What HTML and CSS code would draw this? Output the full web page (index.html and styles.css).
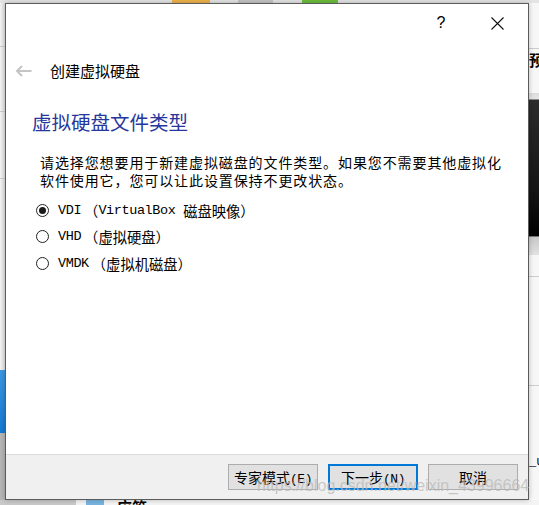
FILE: index.html
```html
<!DOCTYPE html>
<html lang="zh-CN">
<head>
  <meta charset="UTF-8">
  <meta name="viewport" content="width=device-width, initial-scale=1.0">
  <title>创建虚拟硬盘</title>
  <link rel="stylesheet" href="styles.css">
</head>
<body>
  <div class="desk">
    <!-- main VirtualBox window behind the dialog -->
    <div class="app">
      <div class="app-top">
        <span class="tool tool-orange"></span>
        <span class="tool tool-gray"></span>
        <span class="tool tool-green"></span>
      </div>
      <div class="app-left">
        <span class="rule" style="top: 43px"></span>
        <span class="rule" style="top: 108px"></span>
        <span class="rule" style="top: 175px"></span>
        <span class="sel"></span>
        <span class="below"></span>
      </div>
      <div class="app-right">
        <span class="rule" style="top: 45px"></span>
        <span class="pre-char">预</span>
        <span class="preview"></span>
        <span class="rule" style="top: 273px"></span>
        <span class="rule" style="top: 382px"></span>
        <span class="tail">_u</span>
      </div>
      <div class="app-bottom">
        <span class="bot-icon"></span>
        <span class="bot-text">应答</span>
      </div>
    </div>

    <div class="dialog">
      <div class="titlebar">
        <span class="tb-help">?</span>
        <span class="tb-close">
          <svg width="13" height="13" viewBox="0 0 13 13"><path d="M0.5 0.5 L12.5 12.5 M12.5 0.5 L0.5 12.5" stroke="#111" stroke-width="1.1" fill="none"/></svg>
        </span>
      </div>

      <div class="header">
        <svg class="back" width="17" height="12" viewBox="0 0 17 12"><path d="M16.5 6 H2 M7 1 L2 6 L7 11" stroke="#c4c4c4" stroke-width="2" fill="none"/></svg>
        <span class="header-title">创建虚拟硬盘</span>
      </div>

      <div class="page">
        <h2 class="page-title">虚拟硬盘文件类型</h2>
        <p class="desc">请选择您想要用于新建虚拟磁盘的文件类型。如果您不需要其他虚拟化软件使用它，您可以让此设置保持不更改状态。</p>
        <div class="options">
          <div class="opt"><span class="radio on"></span><span class="lat fmt">VDI</span>（<span class="lat">VirtualBox </span>磁盘映像）</div>
          <div class="opt"><span class="radio"></span><span class="lat fmt">VHD</span>（虚拟硬盘）</div>
          <div class="opt"><span class="radio"></span><span class="lat fmt">VMDK</span>（虚拟机磁盘）</div>
        </div>
      </div>

      <div class="footer">
        <button class="btn">专家模式<span class="lat">(E)</span></button>
        <button class="btn primary">下一步<span class="lat">(N)</span></button>
        <button class="btn">取消</button>
      </div>
    </div>

    <div class="watermark">https://blog.csdn.net/weixin_43996664</div>
  </div>
</body>
</html>
```

FILE: styles.css
```css
body {
  margin: 0;
  padding: 0;
  background: #f2f2f2;
  font-family: "Noto Sans CJK SC", sans-serif;
  color: #000;
}
.desk {
  position: relative;
  width: 539px;
  height: 505px;
  overflow: hidden;
}

/* background app */
.app {
  position: absolute;
  inset: 0;
}
.app-top {
  position: absolute;
  left: 0;
  top: 0;
  width: 539px;
  height: 3px;
  background: #e4e4e4;
}
.tool {
  position: absolute;
  top: 0;
  height: 3px;
}
.tool-orange { left: 172px; width: 38px; background: #eeb24c; }
.tool-gray { left: 238px; width: 35px; background: #c4c4c4; }
.tool-green { left: 302px; width: 36px; background: #6cbd3c; }

.app-left {
  position: absolute;
  left: 0;
  top: 3px;
  width: 5px;
  height: 497px;
  background: linear-gradient(to right, #f3f3f3, #e2e2e2);
}
.app-right {
  position: absolute;
  left: 529px;
  top: 3px;
  width: 10px;
  height: 497px;
  background: #f7f7f7;
}
.rule {
  position: absolute;
  left: 0;
  right: 0;
  height: 1px;
  background: #cdcdcd;
}
.app-left .sel {
  position: absolute;
  left: 0;
  right: 0;
  top: 367px;
  height: 63px;
  background: linear-gradient(#3d97e2, #1479d4);
}
.app-left .below {
  position: absolute;
  left: 0;
  right: 0;
  top: 430px;
  bottom: 0;
  background: #b6b6b6;
}
.pre-char {
  position: absolute;
  left: 0;
  top: 47px;
  font-size: 15px;
  font-weight: bold;
  line-height: 20px;
}
.preview {
  position: absolute;
  left: 0;
  right: 0;
  top: 90px;
  height: 162px;
  background: linear-gradient(#dcdcdc 0, #e6e6e6 6px, #2c2c2c 7px, #151515 60%, #000 88%, #c8c8c8 89%, #e2e2e2 100%);
}
.tail {
  position: absolute;
  left: 0;
  top: 452px;
  font-family: "Liberation Mono", monospace;
  font-size: 12px;
}
.app-bottom {
  position: absolute;
  left: 0;
  top: 500px;
  width: 539px;
  height: 5px;
  background: linear-gradient(to right, #c9c9c9 76px, #f4f4f4 76px);
}
.bot-icon {
  position: absolute;
  left: 86px;
  top: 0;
  width: 18px;
  height: 5px;
  background: #78b4e0;
}
.bot-text {
  position: absolute;
  left: 117px;
  top: -1px;
  font-size: 15px;
  font-weight: bold;
  line-height: 16px;
}

/* dialog */
.dialog {
  position: absolute;
  left: 5px;
  top: 3px;
  width: 524px;
  height: 497px;
  box-sizing: border-box;
  border: 1px solid #5b5b5b;
  background: #fff;
  display: flex;
  flex-direction: column;
  box-shadow: 0 0 5px rgba(0, 0, 0, 0.25);
}
.titlebar {
  height: 38px;
  display: flex;
  justify-content: flex-end;
  align-items: center;
}
.tb-help {
  width: 30px;
  margin-right: 26px;
  text-align: center;
  font-family: "Liberation Sans", sans-serif;
  font-size: 16px;
  line-height: 20px;
}
.tb-close {
  width: 30px;
  margin-right: 16px;
  display: flex;
  justify-content: center;
}
.header {
  height: 58px;
  display: flex;
  align-items: center;
  padding-left: 9px;
}
.header-title {
  margin-left: 18px;
  font-size: 15px;
  line-height: 20px;
}
.page {
  padding: 10px 0 0 26px;
}
.page-title {
  margin: 0;
  font-size: 19.5px;
  font-weight: normal;
  line-height: 24px;
  color: #26379c;
}
.desc {
  width: 470px;
  margin: 19px 0 0 8px;
  font-size: 14px;
  letter-spacing: 0.9px;
  line-height: 18px;
}
.options {
  margin-top: 8px;
  display: flex;
  flex-direction: column;
}
.opt {
  height: 26.5px;
  display: flex;
  align-items: center;
  padding-left: 4px;
  font-size: 14.3px;
  white-space: pre;
}
.lat {
  font-family: "Liberation Mono", monospace;
  font-size: 13.5px;
  letter-spacing: -0.4px;
}
.lat.fmt {
  margin-right: 3px;
}
.radio {
  position: relative;
  width: 13px;
  height: 13px;
  box-sizing: border-box;
  border: 1px solid #222;
  border-radius: 50%;
  background: #fff;
  margin-right: 9px;
}
.radio.on::after {
  content: "";
  position: absolute;
  left: 2px;
  top: 2px;
  width: 7px;
  height: 7px;
  border-radius: 50%;
  background: #1a1a1a;
}
.footer {
  margin-top: auto;
  height: 45px;
  box-sizing: border-box;
  border-top: 1px solid #dcdcdc;
  background: #f0f0f0;
  display: flex;
  justify-content: flex-end;
  gap: 10px;
  padding: 9px 10px 0 0;
}
.btn {
  width: 90px;
  height: 26px;
  box-sizing: border-box;
  padding: 0;
  border: 1px solid #adadad;
  background: #e1e1e1;
  font-family: "Noto Sans CJK SC", sans-serif;
  font-size: 14px;
  color: #000;
}
.btn .lat {
  font-size: 13px;
}
.btn.primary {
  border: 2px solid #0078d7;
}

.watermark {
  position: absolute;
  left: 257px;
  top: 477px;
  font-family: "Liberation Sans", sans-serif;
  font-size: 16px;
  line-height: 18px;
  color: rgba(185, 185, 185, 0.75);
  white-space: nowrap;
}
```
